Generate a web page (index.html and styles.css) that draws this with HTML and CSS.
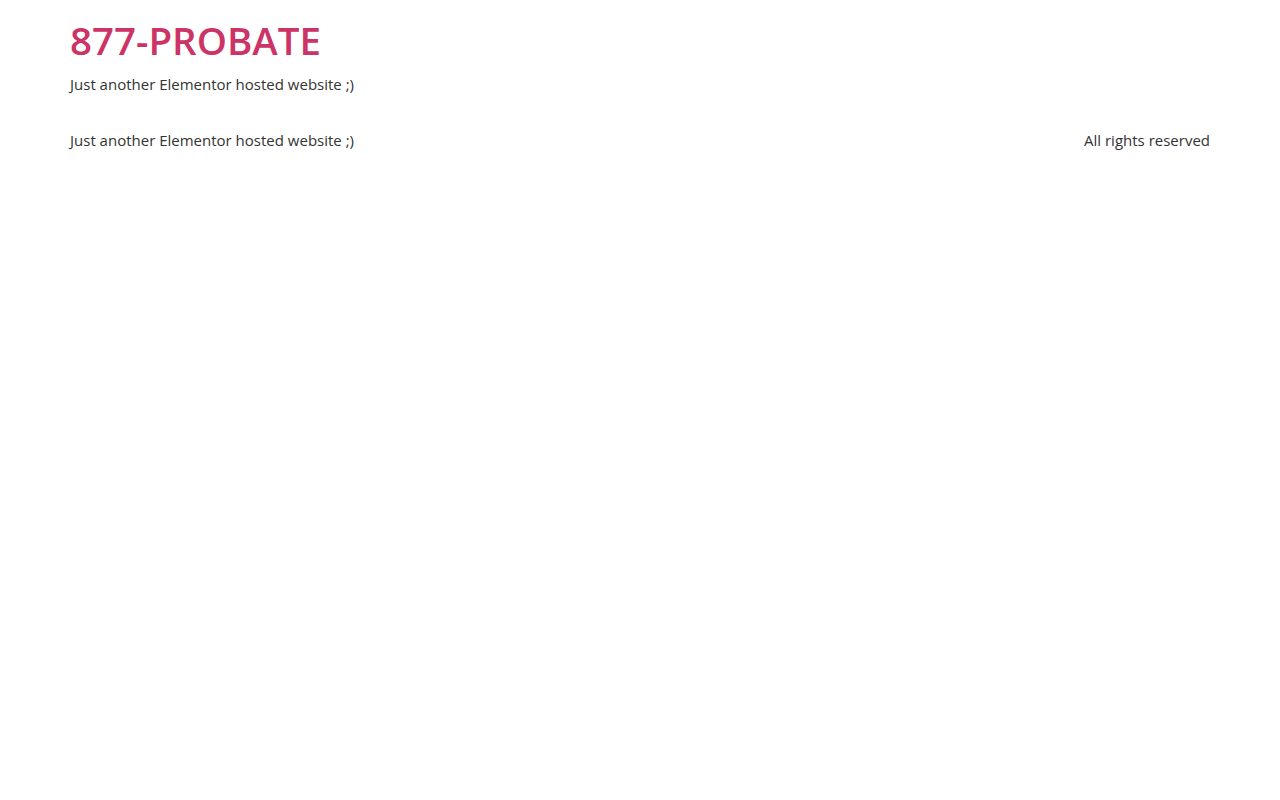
FILE: index.html
```html
<!DOCTYPE html>
<html lang="en">
<head>
<meta charset="utf-8">
<title>877-PROBATE</title>
<link rel="stylesheet" href="styles.css">
</head>
<body>
<header class="site-header">
  <div class="site-branding">
    <h1 class="site-title"><a href="#">877-PROBATE</a></h1>
    <p class="site-description">Just another Elementor hosted website ;)</p>
  </div>
</header>
<footer class="site-footer">
  <div class="footer-inner">
    <p class="site-description">Just another Elementor hosted website ;)</p>
    <p class="copyright">All rights reserved</p>
  </div>
</footer>
</body>
</html>
```
FILE: styles.css
```css
html, body {
  margin: 0;
  padding: 0;
  background: #fff;
}
body {
  font-family: "Open Sans", "Noto Sans", sans-serif;
  font-size: 15px;
  line-height: 1.5;
  color: #333;
}
.site-header {
  max-width: 1140px;
  margin: 0 auto;
  padding: 17px 0 16px;
}
.site-title {
  margin: 0 0 10px;
  font-size: 38.5px;
  font-weight: 600;
  line-height: 1.2;
}
.site-title a {
  color: #c36;
  text-decoration: none;
}
.site-description {
  margin: 0;
}
.site-footer {
  max-width: 1140px;
  margin: 0 auto;
  padding: 17px 0 16px;
}
.footer-inner {
  display: flex;
  justify-content: space-between;
  align-items: center;
}
.copyright {
  margin: 0;
}
```
